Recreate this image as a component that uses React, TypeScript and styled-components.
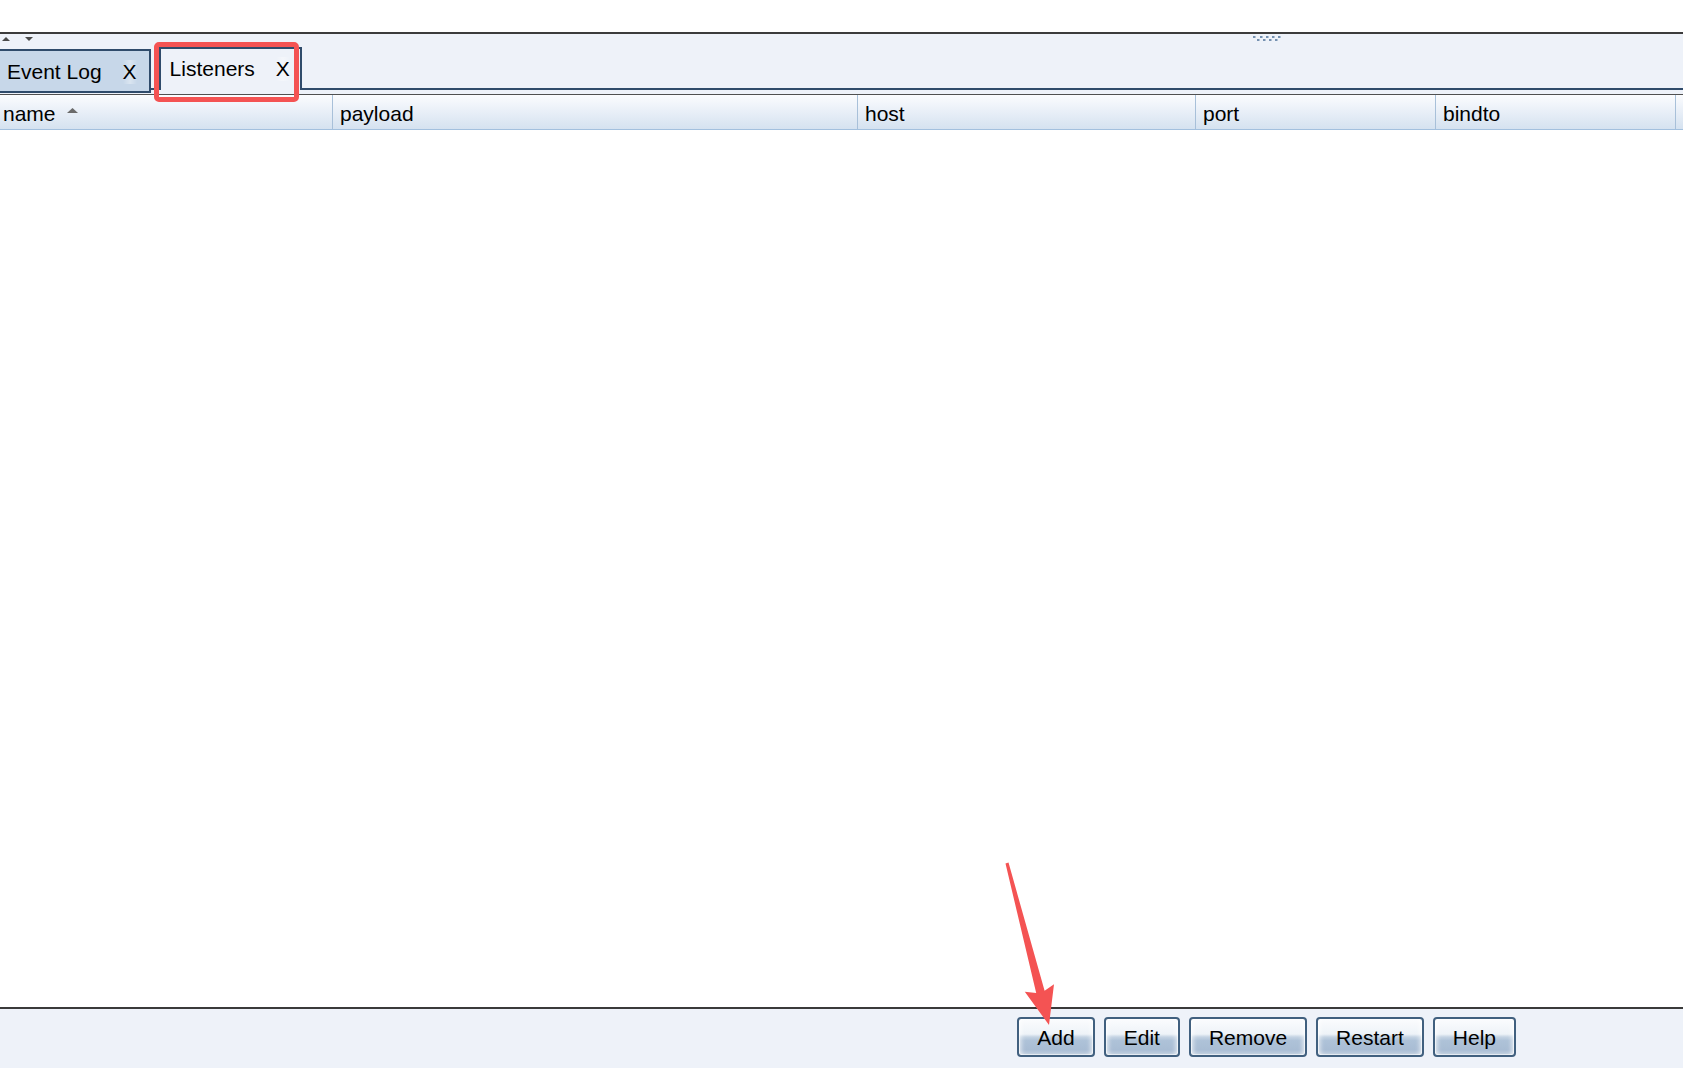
import React from "react";
import styled, { createGlobalStyle } from "styled-components";

const GlobalStyle = createGlobalStyle`
  html, body {
    margin: 0;
    padding: 0;
    height: 100%;
    overflow: hidden;
    background: #ffffff;
  }
  body {
    font-family: "Liberation Sans", Arial, sans-serif;
    color: #000;
  }
  #root { height: 100%; }
`;

const Window = styled.div`
  position: relative;
  height: 100vh;
  display: flex;
  flex-direction: column;
`;

const UpperPane = styled.div`
  height: 32px;
  background: #ffffff;
  border-bottom: 2px solid #3c3c3c;
  flex: none;
`;

const LowerPane = styled.div`
  flex: 1;
  display: flex;
  flex-direction: column;
  background: #eef2f9;
  min-height: 0;
`;

const SplitBar = styled.div`
  height: 10px;
  flex: none;
  display: flex;
  align-items: center;
  padding-left: 2px;
  gap: 15px;
`;

const Grip = styled.svg`
  margin-left: 1205px;
  display: block;
`;

const TabRow = styled.div`
  height: 46px;
  flex: none;
  box-sizing: border-box;
  display: flex;
  align-items: flex-end;
  border-bottom: 2px solid #2f4b6b;
`;

const Tab = styled.div<{ $active?: boolean }>`
  box-sizing: border-box;
  display: flex;
  align-items: center;
  font-size: 21px;
  line-height: 24px;
  border: 2px solid #2f4b6b;
  white-space: nowrap;
  ${(p) =>
    p.$active
      ? `
    height: 43px;
    margin-left: 8px;
    margin-bottom: -2px;
    border-bottom: none;
    background: #eef2f9;
    padding: 0 10px 2px 9px;
  `
      : `
    height: 44px;
    margin-left: -2px;
    margin-bottom: -5px;
    background: #c7d7e9;
    padding: 2px 12px 0 7px;
  `}
`;

const CloseX = styled.span`
  margin-left: 21px;
  background: linear-gradient(
    to right,
    rgba(255, 255, 255, 0) 0%,
    rgba(255, 255, 255, 0.35) 50%,
    rgba(255, 255, 255, 0) 100%
  );
`;

const TabGap = styled.div`
  height: 4px;
  flex: none;
`;

const Table = styled.div`
  flex: 1;
  display: flex;
  flex-direction: column;
  border-top: 1px solid #505050;
  border-bottom: 2px solid #3a3a3a;
  min-height: 0;
`;

const HeaderRow = styled.div`
  display: grid;
  grid-template-columns: 333px 525px 338px 240px 240px 1fr;
  height: 35px;
  box-sizing: border-box;
  background: linear-gradient(to bottom, #fbfcfe 0%, #eaf0f8 45%, #d5e2f0 100%);
  border-bottom: 1px solid #a3c0de;
  flex: none;
`;

const HeaderCell = styled.div<{ $first?: boolean; $last?: boolean }>`
  display: flex;
  align-items: center;
  box-sizing: border-box;
  font-size: 21px;
  line-height: 28px;
  padding-top: 4px;
  padding-left: ${(p) => (p.$first ? "3px" : "7px")};
  border-right: ${(p) => (p.$last ? "none" : "1px solid #a8c0d9")};
  white-space: nowrap;
  overflow: hidden;
`;

const SortMark = styled.svg`
  margin-left: 11px;
  margin-top: -6px;
  display: block;
`;

const Body = styled.div`
  flex: 1;
  background: #ffffff;
`;

const ButtonBar = styled.div`
  height: 59px;
  flex: none;
  box-sizing: border-box;
  display: flex;
  justify-content: flex-end;
  align-items: flex-start;
  gap: 9px;
  padding: 8px 167px 0 0;
`;

const Button = styled.button`
  height: 40px;
  box-sizing: border-box;
  padding: 1px 18px 0;
  border: 2px solid #41607f;
  border-radius: 4px;
  font-family: "Liberation Sans", Arial, sans-serif;
  font-size: 21px;
  color: #000;
  line-height: 35px;
  background: linear-gradient(
    to bottom,
    #fbfcfe 0%,
    #eef3f8 42%,
    #c4d3e3 50%,
    #aec2d8 60%,
    #a9bdd4 85%,
    #c3d1e1 100%
  );
  box-shadow: inset 0 0 0 1px rgba(255, 255, 255, 0.55),
    inset 5px 0 5px -3px rgba(255, 255, 255, 0.75),
    inset -5px 0 5px -3px rgba(255, 255, 255, 0.75);
  cursor: pointer;
`;

const Highlight = styled.div`
  position: absolute;
  left: 154px;
  top: 42px;
  width: 145px;
  height: 60px;
  box-sizing: border-box;
  border: 5px solid #f45353;
  border-radius: 5px;
  pointer-events: none;
`;

const Pointer = styled.svg`
  position: absolute;
  left: 1000px;
  top: 855px;
  pointer-events: none;
`;

const columns = ["name", "payload", "host", "port", "bindto"];
const buttons = ["Add", "Edit", "Remove", "Restart", "Help"];

function GripDots() {
  const top = [0, 7, 13, 19, 25];
  const bottom = [4, 10, 16, 22];
  return (
    <Grip width="30" height="6" viewBox="0 0 30 6">
      {top.map((x) => (
        <rect key={`t${x}`} x={x} y={0} width="2.5" height="2" fill="#7591b1" />
      ))}
      {bottom.map((x) => (
        <rect key={`b${x}`} x={x} y={3} width="2.5" height="2" fill="#7591b1" />
      ))}
    </Grip>
  );
}

export default function App() {
  return (
    <Window>
      <GlobalStyle />
      <UpperPane />
      <LowerPane>
        <SplitBar>
          <svg width="8" height="5" viewBox="0 0 8 5" style={{ display: "block" }}>
            <polygon points="4,0 8,4 0,4" fill="#4a4a4a" />
          </svg>
          <svg width="8" height="5" viewBox="0 0 8 5" style={{ display: "block" }}>
            <polygon points="0,0 8,0 4,4" fill="#4a4a4a" />
          </svg>
          <GripDots />
        </SplitBar>
        <TabRow>
          <Tab>
            Event Log<CloseX>X</CloseX>
          </Tab>
          <Tab $active>
            Listeners<CloseX>X</CloseX>
          </Tab>
        </TabRow>
        <TabGap />
        <Table>
          <HeaderRow>
            {columns.map((c, i) => (
              <HeaderCell key={c} $first={i === 0}>
                {c}
                {i === 0 && (
                  <SortMark width="11" height="6" viewBox="0 0 11 6">
                    <polygon points="5.5,0 11,5 0,5" fill="#6b6b6b" />
                  </SortMark>
                )}
              </HeaderCell>
            ))}
            <HeaderCell $last />
          </HeaderRow>
          <Body />
        </Table>
        <ButtonBar>
          {buttons.map((b) => (
            <Button key={b}>{b}</Button>
          ))}
        </ButtonBar>
      </LowerPane>
      <Highlight />
      <Pointer width="60" height="175" viewBox="0 0 60 175">
        <polygon
          points="8.5,7.6 44.6,135.8 54,129.2 49,170 24.8,136.8 36.2,138 5.5,8.4"
          fill="#f45353"
        />
      </Pointer>
    </Window>
  );
}
